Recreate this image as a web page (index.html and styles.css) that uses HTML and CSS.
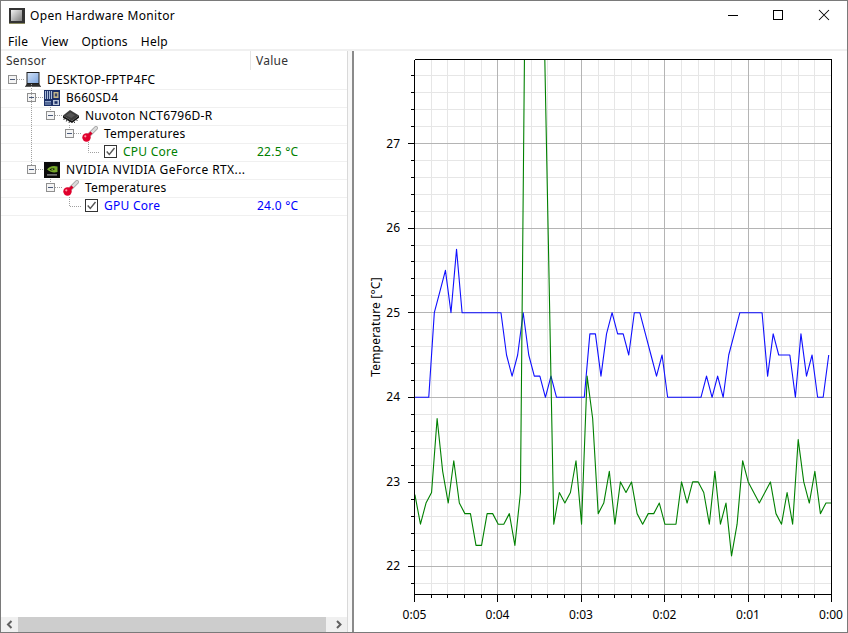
FILE: index.html
```html
<!DOCTYPE html>
<html lang="en">
<head>
<meta charset="utf-8">
<title>Open Hardware Monitor</title>
<link rel="stylesheet" href="styles.css">
</head>
<body>
<svg class="defs" width="0" height="0" aria-hidden="true">
  <defs>
    <linearGradient id="app-g" x1="0" y1="0" x2="1" y2="1"><stop offset="0" stop-color="#f2f2f2"/><stop offset="1" stop-color="#7d7d7d"/></linearGradient>
    <linearGradient id="screen-g" x1="0" y1="0" x2="1" y2="1"><stop offset="0" stop-color="#cfe0f6"/><stop offset="1" stop-color="#7fa6e0"/></linearGradient>
    <symbol id="i-laptop" viewBox="0 0 16 16">
      <rect x="1.500" y="0" width="13" height="12" fill="#1e1e1e"/>
      <rect x="2.500" y="1" width="11" height="10" fill="url(#screen-g)"/>
      <path d="M1.500 12h13l1.500 3H0z" fill="#2e2e2e"/>
      <path d="M1 14.500h14" stroke="#6a6a6a" stroke-width=".8"/>
    </symbol>
    <symbol id="i-board" viewBox="0 0 16 16">
      <rect width="16" height="16" fill="#1c2f66"/>
      <path d="M1.500 1v8M3.500 1v8M5.500 1v8M7.500 1v8" stroke="#a9bcd9" stroke-width="1.100"/>
      <rect x="9.500" y="2" width="5" height="6" fill="#c9b98a"/>
      <rect x="10.800" y="3.400" width="2.400" height="3" fill="#38456b"/>
      <rect x="1" y="11" width="6" height="1.500" fill="#8ea3c8"/>
      <rect x="1" y="13.300" width="6" height="1.500" fill="#6d83ad"/>
      <rect x="9" y="10" width="6" height="5" fill="#b9c4d8"/>
      <rect x="10.500" y="11.200" width="3" height="2.600" fill="#1c2f66"/>
    </symbol>
    <symbol id="i-chip" viewBox="0 0 16 16">
      <path d="M0 7.500 7 2 16 7.500 9 13z" fill="#3d3d3d"/>
      <path d="M0 7.500v2.200l9 5.300 7-5.300V7.500L9 13z" fill="#141414"/>
      <path d="M3 7.500 7.300 4.500 12 7.200 8.500 10z" fill="#565656"/>
      <path d="M1.500 10 .8 12M4 11.500 3.300 13.500M6.500 13 6 15M11 13.500 11.700 15M13.500 11.500 14.300 13" stroke="#3a3a3a" stroke-width="1"/>
    </symbol>
    <symbol id="i-therm" viewBox="0 0 16 16">
      <path d="M7 9 14 2" stroke="#a8a8a8" stroke-width="4" stroke-linecap="round"/>
      <path d="M7 9 14 2" stroke="#dcdcdc" stroke-width="2.400" stroke-linecap="round"/>
      <path d="M5 11 9.500 6.500" stroke="#d8002a" stroke-width="2.800"/>
      <circle cx="4.500" cy="11.500" r="4.200" fill="#e0002c"/>
      <circle cx="3.300" cy="10.300" r="1.100" fill="#ff9aa8"/>
    </symbol>
    <symbol id="i-nvidia" viewBox="0 0 16 16">
      <rect width="16" height="16" fill="#0a0a0a"/>
      <path d="M3 7.500C5 4.500 9 3 13.500 4.500V10C10 11 6.500 10.500 3 7.500z" fill="#76a82a"/>
      <path d="M5.500 7.500C7.500 5.800 9.500 5.800 11 7 9.500 8.600 7.500 9 5.500 7.500z" fill="#0a0a0a"/>
      <circle cx="8.300" cy="7.400" r="1" fill="#76a82a"/>
      <rect x="3" y="12.300" width="10" height="1.200" fill="#9a9a9a"/>
    </symbol>
    <symbol id="i-minus" viewBox="0 0 9 9">
      <rect x=".5" y=".5" width="8" height="8" fill="#f4f4f4" stroke="#8f8f8f"/>
      <path d="M2 4.500h5" stroke="#4a5a7a"/>
    </symbol>
    <symbol id="i-check" viewBox="0 0 13 13">
      <rect x=".5" y=".5" width="12" height="12" fill="#fff" stroke="#333"/>
      <path d="M2.700 6.500 5.300 9.500 10.500 3" fill="none" stroke="#555" stroke-width="1.400"/>
    </symbol>
    <clipPath id="plot-clip"><rect x="414" y="59" width="418" height="535"/></clipPath>
  </defs>
</svg>

<div class="window">
  <header class="titlebar">
    <svg class="app-icon" width="16" height="16" viewBox="0 0 16 16"><rect width="16" height="16" fill="#333"/><rect x="2" y="2" width="11" height="11" fill="url(#app-g)"/><path d="M0 15.500h16" stroke="#8a8a60"/></svg>
    <span class="app-title">Open Hardware Monitor</span>
    <div class="win-controls">
      <svg class="win-btn" width="46" height="30" viewBox="0 0 46 30"><path d="M19 14.500h10" stroke="#000"/></svg>
      <svg class="win-btn" width="46" height="30" viewBox="0 0 46 30"><rect x="18.500" y="9.500" width="9" height="9" fill="none" stroke="#000"/></svg>
      <svg class="win-btn" width="46" height="30" viewBox="0 0 46 30"><path d="M18 9l10 10M28 9 18 19" stroke="#000" stroke-width="1.050"/></svg>
    </div>
  </header>
  <nav class="menubar">
    <span class="menu-item">File</span>
    <span class="menu-item">View</span>
    <span class="menu-item">Options</span>
    <span class="menu-item">Help</span>
  </nav>
  <main class="main">
    <section class="sensors">
      <div class="tree-area">
        <div class="tree-head">
          <span class="col-sensor">Sensor</span>
          <span class="col-value">Value</span>
        </div>
        <div class="row lvl0">
          <svg class="exp"><use href="#i-minus"/></svg>
          <svg class="ico"><use href="#i-laptop"/></svg>
          <span class="label">DESKTOP-FPTP4FC</span>
        </div>
        <div class="row lvl1">
          <svg class="exp"><use href="#i-minus"/></svg>
          <svg class="ico"><use href="#i-board"/></svg>
          <span class="label">B660SD4</span>
        </div>
        <div class="row lvl2">
          <svg class="exp"><use href="#i-minus"/></svg>
          <svg class="ico"><use href="#i-chip"/></svg>
          <span class="label">Nuvoton NCT6796D-R</span>
        </div>
        <div class="row lvl3">
          <svg class="exp"><use href="#i-minus"/></svg>
          <svg class="ico"><use href="#i-therm"/></svg>
          <span class="label">Temperatures</span>
        </div>
        <div class="row lvl4 cpu">
          <svg class="chk"><use href="#i-check"/></svg>
          <span class="label">CPU Core</span>
          <span class="value">22.5 °C</span>
        </div>
        <div class="row lvl1">
          <svg class="exp"><use href="#i-minus"/></svg>
          <svg class="ico"><use href="#i-nvidia"/></svg>
          <span class="label label-wide">NVIDIA NVIDIA GeForce RTX...</span>
        </div>
        <div class="row lvl2">
          <svg class="exp"><use href="#i-minus"/></svg>
          <svg class="ico"><use href="#i-therm"/></svg>
          <span class="label">Temperatures</span>
        </div>
        <div class="row lvl3 gpu">
          <svg class="chk"><use href="#i-check"/></svg>
          <span class="label">GPU Core</span>
          <span class="value">24.0 °C</span>
        </div>
        <svg class="connectors" width="346" height="220" viewBox="1 51 346 220">
          <path d="M17 79.500h8M36 97.500h8M55 115.500h8M74 133.500h8M36 169.500h8M55 187.500h8M88.500 142v10.500H100M69.500 197v9.500H81M31.500 84v81M50.500 107v4M69.500 125v4M50.500 179v4" fill="none" stroke="#a0a0a0" stroke-dasharray="1 1"/>
        </svg>
      </div>
      <div class="hscroll">
        <svg class="sb-arrow" width="17" height="15" viewBox="0 0 17 15"><path d="M10.500 4 7 7.500 10.500 11" fill="none" stroke="#606060" stroke-width="2"/></svg>
        <div class="sb-track"><div class="sb-thumb"></div></div>
        <svg class="sb-arrow" width="17" height="15" viewBox="0 0 17 15"><path d="M7 4 10.500 7.500 7 11" fill="none" stroke="#606060" stroke-width="2"/></svg>
      </div>
    </section>
    <div class="splitter"></div>
    <section class="chart">
      <svg class="plot" width="493" height="581" viewBox="354 51 493 581">
        <path class="grid-minor" d="M431.500 59V594M447.500 59V594M464.500 59V594M481.500 59V594M514.500 59V594M531.500 59V594M547.500 59V594M564.500 59V594M598.500 59V594M614.500 59V594M631.500 59V594M648.500 59V594M681.500 59V594M698.500 59V594M714.500 59V594M731.500 59V594M764.500 59V594M781.500 59V594M798.500 59V594M814.500 59V594M414 75.500H832M414 92.500H832M414 109.500H832M414 126.500H832M414 160.500H832M414 177.500H832M414 194.500H832M414 211.500H832M414 245.500H832M414 261.500H832M414 278.500H832M414 295.500H832M414 329.500H832M414 346.500H832M414 363.500H832M414 380.500H832M414 414.500H832M414 431.500H832M414 448.500H832M414 465.500H832M414 499.500H832M414 516.500H832M414 533.500H832M414 550.500H832M414 583.500H832"/>
        <path class="grid-major" d="M497.500 59V594M581.500 59V594M664.500 59V594M748.500 59V594M414 143.500H832M414 228.500H832M414 312.500H832M414 397.500H832M414 482.500H832M414 566.500H832"/>
        <g clip-path="url(#plot-clip)">
          <g transform="translate(412.1 2427.7) scale(5.555 -84.6)">
            <polyline class="series series-blue" points="0,24 1,24 2,24 3,24 4,25 5,25.25 6,25.5 7,25 8,25.75 9,25 10,25 11,25 12,25 13,25 14,25 15,25 16,25 17,24.5 18,24.25 19,24.5 20,25 21,24.5 22,24.25 23,24.25 24,24 25,24.25 26,24 27,24 28,24 29,24 30,24 31,24 32,24.75 33,24.75 34,24.25 35,24.75 36,25 37,24.75 38,24.75 39,24.5 40,25 41,25 42,24.75 43,24.5 44,24.25 45,24.5 46,24 47,24 48,24 49,24 50,24 51,24 52,24 53,24.25 54,24 55,24.25 56,24 57,24.5 58,24.75 59,25 60,25 61,25 62,25 63,25 64,24.25 65,24.75 66,24.5 67,24.5 68,24.5 69,24 70,24.75 71,24.25 72,24.5 73,24 74,24 75,24.5"/>
          </g>
          <g transform="translate(414.9 2427.7) scale(5.555 -84.6)">
            <polyline class="series series-green" points="0,22.85 1,22.5 2,22.75 3,22.875 4,23.75 5,23.125 6,22.75 7,23.25 8,22.75 9,22.625 10,22.625 11,22.25 12,22.25 13,22.625 14,22.625 15,22.5 16,22.5 17,22.625 18,22.25 19,22.875 20,30 21,30 22,30 23,29.3 24,25.92 25,22.5 26,22.875 27,22.75 28,22.875 29,23.25 30,22.5 31,24.25 32,23.75 33,22.625 34,22.75 35,23.125 36,22.5 37,23 38,22.875 39,23 40,22.625 41,22.5 42,22.625 43,22.625 44,22.75 45,22.5 46,22.5 47,22.5 48,23 49,22.75 50,23 51,23 52,22.875 53,22.5 54,23.125 55,22.5 56,22.75 57,22.125 58,22.5 59,23.25 60,23 61,22.875 62,22.75 63,22.875 64,23 65,22.625 66,22.5 67,22.875 68,22.5 69,23.5 70,23 71,22.75 72,23.125 73,22.625 74,22.75 75,22.75"/>
          </g>
        </g>
        <path class="axis" d="M414.500 59.500H831.500V594.500H414.500V59.500M414.500 594V602M408 143.500H414M408 228.500H414M408 312.500H414M408 397.500H414M408 482.500H414M408 566.500H414M411 75.500H414M411 92.500H414M411 109.500H414M411 126.500H414M411 160.500H414M411 177.500H414M411 194.500H414M411 211.500H414M411 245.500H414M411 261.500H414M411 278.500H414M411 295.500H414M411 329.500H414M411 346.500H414M411 363.500H414M411 380.500H414M411 414.500H414M411 431.500H414M411 448.500H414M411 465.500H414M411 499.500H414M411 516.500H414M411 533.500H414M411 550.500H414M411 583.500H414M431.500 594V598M447.500 594V598M464.500 594V598M481.500 594V598M497.500 594V602M514.500 594V598M531.500 594V598M547.500 594V598M564.500 594V598M581.500 594V602M598.500 594V598M614.500 594V598M631.500 594V598M648.500 594V598M664.500 594V602M681.500 594V598M698.500 594V598M714.500 594V598M731.500 594V598M748.500 594V602M764.500 594V598M781.500 594V598M798.500 594V598M814.500 594V598M831.500 594V602"/>
        <g class="tick-y">
          <text x="400" y="148">27</text>
          <text x="400" y="232">26</text>
          <text x="400" y="317">25</text>
          <text x="400" y="401">24</text>
          <text x="400" y="486">23</text>
          <text x="400" y="570">22</text>
        </g>
        <g class="tick-x">
          <text x="414.500" y="619">0:05</text>
          <text x="497.500" y="619">0:04</text>
          <text x="581" y="619">0:03</text>
          <text x="664.500" y="619">0:02</text>
          <text x="748" y="619">0:01</text>
          <text x="831" y="619">0:00</text>
        </g>
        <text class="axis-title" transform="translate(380 327) rotate(-90)">Temperature [°C]</text>
      </svg>
    </section>
  </main>
</div>
</body>
</html>
```

FILE: styles.css
```css
* { box-sizing: border-box; }
html, body { margin: 0; padding: 0; background: #fff; }
body { width: 848px; height: 633px; overflow: hidden; font-family: "Noto Sans", "Open Sans", sans-serif; font-size: 12px; color: #000; }
.defs { position: absolute; }
.window { width: 848px; height: 633px; border: 1px solid #7a7a7a; display: flex; flex-direction: column; background: #fff; }
.titlebar { height: 30px; flex: none; display: flex; align-items: center; padding: 0 0 1px 8px; }
.app-icon { flex: none; }
.app-title { margin-left: 5px; font-size: 12px; letter-spacing: .35px; }
.win-controls { margin-left: auto; display: flex; align-self: flex-start; }
.win-btn { display: block; }
.menubar { height: 20px; flex: none; display: flex; align-items: center; padding: 2px 0 0 7px; border-bottom: 2px solid #f0f0f0; font-size: 12px; letter-spacing: .25px; }
.menu-item { margin-right: 13px; }
.main { flex: 1; min-height: 0; display: flex; }
.sensors { width: 346px; flex: none; display: flex; flex-direction: column; letter-spacing: .25px; }
.tree-area { flex: 1; position: relative; min-height: 0; }
.tree-head { height: 21px; display: flex; align-items: flex-start; color: #333; }
.col-sensor { width: 250px; padding-left: 5px; height: 19px; line-height: 20px; border-right: 1px solid #e5e5e5; }
.col-value { padding-left: 5px; line-height: 20px; }
.row { height: 18px; padding-bottom: 2px; display: flex; align-items: center; position: relative; border-bottom: 1px solid #f0f0f0; }
.lvl0 { padding-left: 7px; }
.lvl1 { padding-left: 26px; }
.lvl2 { padding-left: 45px; }
.lvl3 { padding-left: 64px; }
.lvl3.gpu { padding-left: 84px; }
.lvl4.cpu { padding-left: 103px; }
.exp { width: 9px; height: 9px; flex: none; margin-right: 8px; }
.ico { width: 16px; height: 16px; flex: none; margin: 1px 6px 0 0; }
.chk { width: 13px; height: 13px; flex: none; margin-right: 6px; }
.label { white-space: nowrap; }
.label-wide { letter-spacing: .4px; }
.value { position: absolute; left: 256px; top: 0; line-height: 15px; }
.cpu .label, .cpu .value { color: #008000; }
.gpu .label, .gpu .value { color: #0000ff; }
.connectors { position: absolute; left: 0; top: 0; pointer-events: none; }
.hscroll { height: 15px; flex: none; display: flex; background: #f0f0f0; }
.sb-arrow { flex: none; display: block; }
.sb-track { flex: 1; }
.sb-thumb { width: 308px; height: 15px; background: #cdcdcd; }
.splitter { width: 7px; flex: none; border-left: 1px solid #d9d9d9; border-right: 2px solid #8a8a8a; background: #f8f8f8; }
.chart { flex: 1; min-width: 0; }
.plot { display: block; }
.grid-minor { stroke: #e6e6e6; fill: none; shape-rendering: crispEdges; }
.grid-major { stroke: #b4b4b4; fill: none; shape-rendering: crispEdges; }
.axis { stroke: #000; fill: none; shape-rendering: crispEdges; }
.series { fill: none; stroke-width: 1.1; vector-effect: non-scaling-stroke; stroke-linejoin: round; }
.series-blue { stroke: #0f0fff; }
.series-green { stroke: #008000; }
.tick-y text { text-anchor: end; font-size: 12px; fill: #000; }
.tick-x text { text-anchor: middle; font-size: 12px; fill: #000; }
.axis-title { text-anchor: middle; font-size: 12px; fill: #000; letter-spacing: .2px; }
```
